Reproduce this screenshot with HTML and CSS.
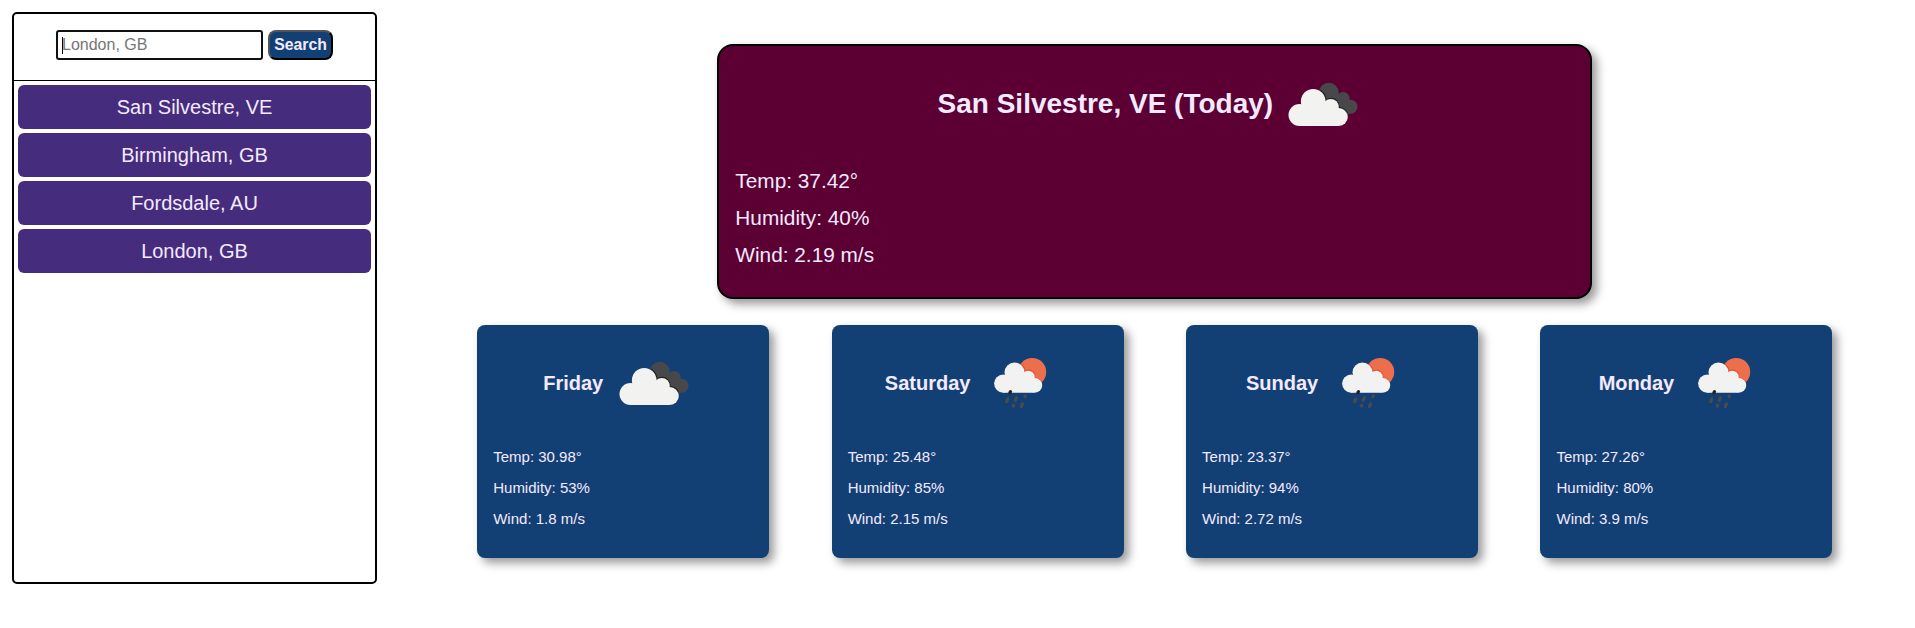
FILE: index.html
```html
<!DOCTYPE html>
<html lang="en">
<head>
<meta charset="utf-8">
<title>Weather Dashboard</title>
<link rel="stylesheet" href="styles.css">
</head>
<body>
<svg class="defs" width="0" height="0">
  <clipPath id="back-cloud">
    <circle cx="56.8" cy="38.7" r="10"/><circle cx="71.2" cy="44.6" r="6.5"/><circle cx="78.5" cy="52.7" r="7"/>
    <path d="M56 40L70 42L76 50L78.5 59.7H66L50 46Z"/>
  </clipPath>
  <clipPath id="sun"><circle cx="62.2" cy="39" r="14"/></clipPath>
  <symbol id="clouds" viewBox="0 0 100 100">
    <g fill="#48484a">
      <circle cx="56.8" cy="38.7" r="10"/><circle cx="71.2" cy="44.6" r="6.5"/><circle cx="78.5" cy="52.7" r="7"/>
      <path d="M56 40L70 42L76 50L78.5 59.7H66L50 46Z"/>
    </g>
    <g fill="#222224" clip-path="url(#back-cloud)">
      <circle cx="41.6" cy="46.7" r="12.9"/><circle cx="59.2" cy="52.1" r="8.4"/><circle cx="67.2" cy="62.4" r="9.4"/>
    </g>
    <g fill="#f2f2f0">
      <circle cx="27.5" cy="61" r="11"/><circle cx="41.2" cy="47.3" r="12.3"/><circle cx="58.8" cy="52.9" r="8"/><circle cx="66.8" cy="63" r="9"/>
      <path d="M27.5 52H31L41 47L58 51L66 58V72H27.5Z"/>
    </g>
  </symbol>
  <symbol id="rain" viewBox="0 0 100 100">
    <circle cx="62.2" cy="39" r="14" fill="#ec6e4c"/>
    <g fill="#e9502c" clip-path="url(#sun)">
      <circle cx="45" cy="38.9" r="10.4"/><circle cx="58.6" cy="43.5" r="6.9"/><circle cx="65.2" cy="52" r="7.5"/>
    </g>
    <g fill="#f2f2f2">
      <circle cx="33.2" cy="50.6" r="9.1"/><circle cx="44.5" cy="39.5" r="10"/><circle cx="58.2" cy="44.2" r="6.5"/><circle cx="64.9" cy="52.4" r="7.3"/>
      <path d="M33 43L36 42L44 38L58 42L64 49V59.7H33Z"/>
    </g>
    <g stroke="#4a4a4c" stroke-width="3.2" stroke-linecap="round">
      <path d="M36.7 68.6L37.7 66M45.4 67.3L46.4 64.7M51.4 73.6L52.4 71M55 63.6L55.4 63M43.3 73L43.7 72.4"/>
      <path d="M39.9 59.6L40.5 58.6" stroke="#222"/>
    </g>
  </symbol>
</svg>
<div class="layout">
  <aside class="sidebar">
    <form class="search">
      <div class="field">
        <input class="search-input" type="text" placeholder="London, GB">
        <span class="caret"></span>
      </div>
      <button class="search-button" type="button">Search</button>
    </form>
    <ul class="history">
      <li class="history-item">San Silvestre, VE</li>
      <li class="history-item">Birmingham, GB</li>
      <li class="history-item">Fordsdale, AU</li>
      <li class="history-item">London, GB</li>
    </ul>
  </aside>
  <main class="main">
    <section class="today">
      <header class="heading"><h1 class="today-title">San Silvestre, VE (Today)</h1><svg class="icon"><use href="#clouds"/></svg></header>
      <p class="today-line">Temp: 37.42°</p>
      <p class="today-line">Humidity: 40%</p>
      <p class="today-line">Wind: 2.19 m/s</p>
    </section>
    <div class="forecast">
      <section class="card">
        <header class="heading"><h2 class="card-title">Friday</h2><svg class="icon"><use href="#clouds"/></svg></header>
        <p class="card-line">Temp: 30.98°</p>
        <p class="card-line">Humidity: 53%</p>
        <p class="card-line">Wind: 1.8 m/s</p>
      </section>
      <section class="card">
        <header class="heading"><h2 class="card-title">Saturday</h2><svg class="icon"><use href="#rain"/></svg></header>
        <p class="card-line">Temp: 25.48°</p>
        <p class="card-line">Humidity: 85%</p>
        <p class="card-line">Wind: 2.15 m/s</p>
      </section>
      <section class="card">
        <header class="heading"><h2 class="card-title">Sunday</h2><svg class="icon"><use href="#rain"/></svg></header>
        <p class="card-line">Temp: 23.37°</p>
        <p class="card-line">Humidity: 94%</p>
        <p class="card-line">Wind: 2.72 m/s</p>
      </section>
      <section class="card">
        <header class="heading"><h2 class="card-title">Monday</h2><svg class="icon"><use href="#rain"/></svg></header>
        <p class="card-line">Temp: 27.26°</p>
        <p class="card-line">Humidity: 80%</p>
        <p class="card-line">Wind: 3.9 m/s</p>
      </section>
    </div>
  </main>
</div>
</body>
</html>
```
FILE: styles.css
```css
* { box-sizing: border-box; margin: 0; padding: 0; }
body { background: #fff; font-family: "Liberation Sans", Arial, sans-serif; color: #f3eaff; overflow: hidden; }
.defs { position: absolute; }
.layout { display: flex; align-items: flex-start; padding: 12px 52.6px 0 12px; }
.sidebar { flex: none; width: 365px; height: 572px; border: 2px solid #000; border-radius: 5px; }
.search { display: flex; justify-content: center; align-items: flex-start; gap: 5px; height: 67px; padding-top: 16px; border-bottom: 1px solid #000; }
.field { position: relative; height: 30px; }
.search-input { display: block; width: 207px; height: 30px; padding: 0 4px; border: 2px solid #101010; border-radius: 3px; background: #fff; font: 16px "Liberation Sans", Arial, sans-serif; outline: none; }
.search-input::placeholder { color: #757575; }
.caret { position: absolute; left: 6px; top: 7px; width: 1px; height: 17px; background: #000; }
.search-button { width: 65px; height: 30px; border: 2px outset #000; border-radius: 8px; background: #134074; color: #f3eaff; font: bold 15.8px "Liberation Sans", Arial, sans-serif; }
.history { list-style: none; display: grid; gap: 4px; padding: 4px; }
.history-item { height: 44px; border-radius: 6px; background: #462c7d; font-size: 20px; line-height: 44px; text-align: center; }
.main { flex: 1; margin-left: 69px; padding-top: 32px; display: flex; flex-direction: column; align-items: center; gap: 26px; }
.today { width: 875px; height: 255px; padding: 8px 16px; border: 2px solid #000; border-radius: 16px; background: #5c0033; box-shadow: 5px 5px 10px #999; }
.heading { display: flex; align-items: center; justify-content: center; height: 100px; margin-bottom: 8px; }
.icon { flex: none; width: 100px; height: 100px; }
.today-title { margin-right: -1px; font-size: 28px; }
.today-line { font-size: 20.8px; line-height: 37px; }
.forecast { width: 1417.7px; display: flex; justify-content: space-around; }
.card { width: 292px; height: 233px; padding: 8px 16px; border-radius: 8px; background: #134074; box-shadow: 5px 5px 10px #999; }
.card-title { font-size: 20px; }
.card-line { font-size: 15px; line-height: 31px; }
```
